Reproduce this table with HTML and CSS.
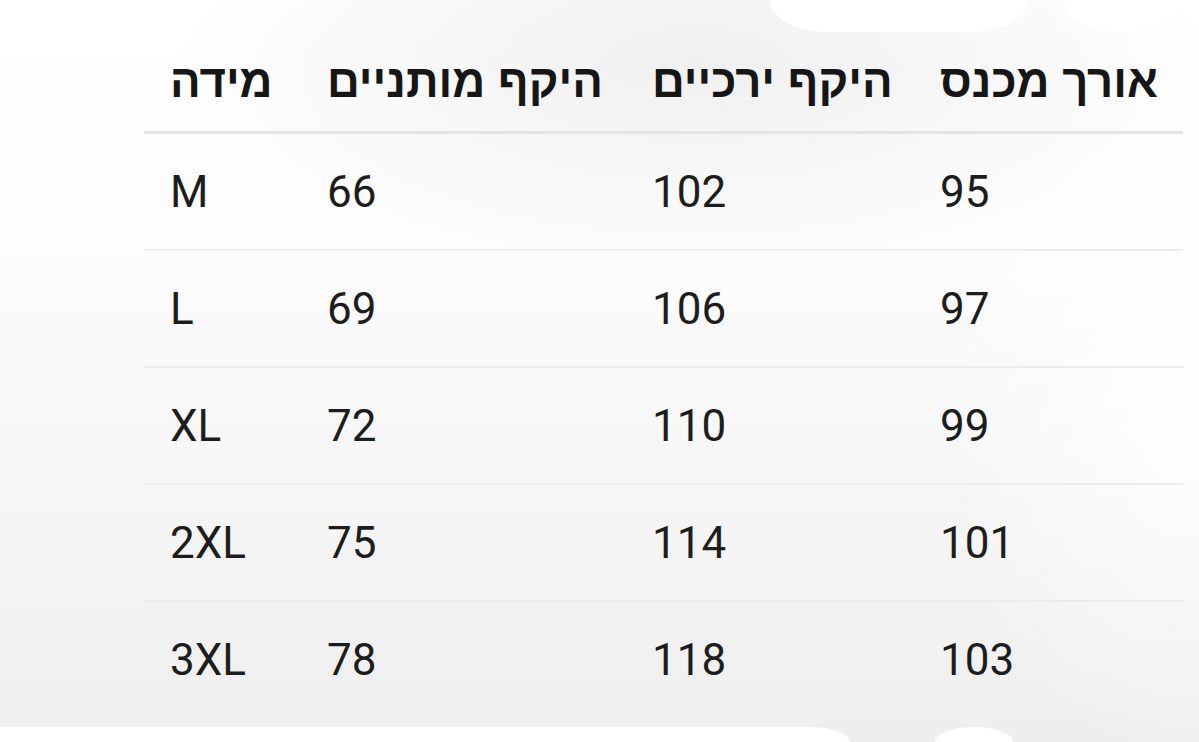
FILE: index.html
```html
<!DOCTYPE html>
<html lang="he">
<head>
<meta charset="utf-8">
<title>טבלת מידות</title>
<link rel="stylesheet" href="styles.css">
</head>
<body>
<div class="page">
  <div class="top-shapes">
    <div class="tab-wide"></div>
    <div class="tab-round"></div>
  </div>
  <div class="size-table">
    <div class="row head">
      <div class="cell" dir="rtl">מידה</div>
      <div class="cell" dir="rtl">היקף מותניים</div>
      <div class="cell" dir="rtl">היקף ירכיים</div>
      <div class="cell" dir="rtl">אורך מכנס</div>
    </div>
    <div class="row">
      <div class="cell">M</div><div class="cell">66</div><div class="cell">102</div><div class="cell">95</div>
    </div>
    <div class="row">
      <div class="cell">L</div><div class="cell">69</div><div class="cell">106</div><div class="cell">97</div>
    </div>
    <div class="row">
      <div class="cell">XL</div><div class="cell">72</div><div class="cell">110</div><div class="cell">99</div>
    </div>
    <div class="row">
      <div class="cell">2XL</div><div class="cell">75</div><div class="cell">114</div><div class="cell">101</div>
    </div>
    <div class="row last">
      <div class="cell">3XL</div><div class="cell">78</div><div class="cell">118</div><div class="cell">103</div>
    </div>
  </div>
  <div class="bottom-shapes">
    <div class="foot-wide"></div>
    <div class="foot-dome"></div>
  </div>
</div>
</body>
</html>
```

FILE: styles.css
```css
html, body {
  margin: 0;
  padding: 0;
}

body {
  width: 1199px;
  height: 742px;
  overflow: hidden;
  background:
    radial-gradient(ellipse 260px 360px at 100% 55%, rgba(255,255,255,0.9) 0%, rgba(255,255,255,0) 100%),
    radial-gradient(ellipse 520px 200px at 58% 8%, rgba(236,236,236,0.8) 0%, rgba(236,236,236,0) 100%),
    linear-gradient(to bottom, #ffffff 0%, #fcfcfc 35%, #f4f4f4 75%, #eeeeee 100%);
  font-family: Roboto, "Liberation Sans", sans-serif;
  color: #1d1d1d;
}

.page {
  display: flex;
  flex-direction: column;
  height: 742px;
}

.top-shapes {
  height: 32px;
  display: flex;
  justify-content: flex-end;
  gap: 36px;
  padding-right: 21px;
}

.tab-wide {
  width: 258px;
  height: 32px;
  background: #ffffff;
  border-radius: 0 0 56px 56px / 0 0 32px 32px;
  filter: blur(0.6px);
}

.tab-round {
  width: 114px;
  height: 32px;
  background: #ffffff;
  border-radius: 0 0 57px 57px / 0 0 34px 34px;
  filter: blur(0.6px);
}

.size-table {
  margin-left: 144px;
  margin-right: 16px;
  display: flex;
  flex-direction: column;
}

.row {
  display: grid;
  grid-template-columns: 157px 325px 288px 269px;
  height: 115px;
  align-items: center;
  border-bottom: 2px solid #ececec;
  font-size: 44px;
  line-height: 1;
}

.row.last {
  border-bottom: none;
}

.row.head {
  height: 99px;
  border-bottom: 3px solid #e4e4e4;
  font-family: "Liberation Sans", "DejaVu Sans", sans-serif;
  font-weight: 700;
  font-size: 45.5px;
  color: #161616;
  align-items: start;
}

.row.head .cell {
  padding-top: 27px;
  text-align: left;
}

.cell {
  padding-left: 26px;
  white-space: nowrap;
}

.bottom-shapes {
  margin-top: auto;
  height: 15px;
  display: flex;
  align-items: flex-end;
}

.foot-wide {
  width: 850px;
  height: 15px;
  background: #ffffff;
  border-top-right-radius: 40px 15px;
}

.foot-dome {
  margin-left: 85px;
  width: 78px;
  height: 15px;
  background: #ffffff;
  border-radius: 39px 39px 0 0 / 15px 15px 0 0;
}
```
